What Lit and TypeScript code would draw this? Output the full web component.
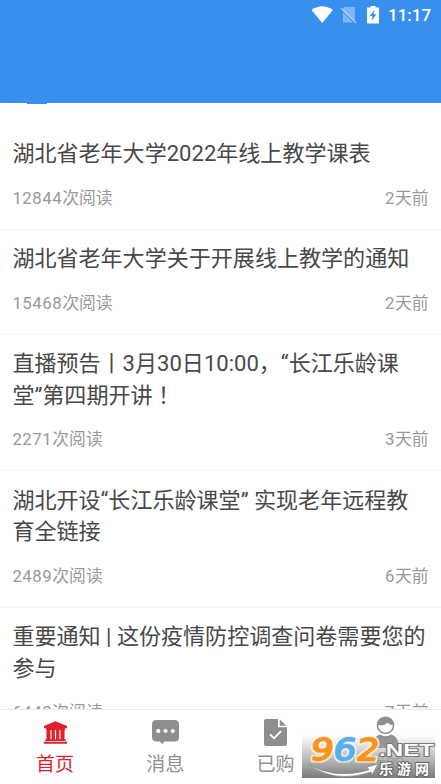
import { LitElement, html, svg, css } from "lit";
import { customElement, property } from "lit/decorators.js";

interface Article {
  title: string;
  mark?: string;
  reads: string;
  date: string;
}

const ARTICLES: Article[] = [
  { title: "湖北省老年大学2022年线上教学课表", reads: "12844", date: "2天前" },
  { title: "湖北省老年大学关于开展线上教学的通知", reads: "15468", date: "2天前" },
  { title: "直播预告丨3月30日10:00，“长江乐龄课堂”第四期开讲", mark: "！", reads: "2271", date: "3天前" },
  { title: "湖北开设“长江乐龄课堂” 实现老年远程教育全链接", reads: "2489", date: "6天前" },
  { title: "重要通知 | 这份疫情防控调查问卷需要您的参与", reads: "6448", date: "7天前" },
];

const ICONS: Record<string, unknown> = {
  home: svg`<path d="M15.500 2.300 27 7V9.300H4V7Z"/><path d="M6 9H25V11H6zM6.500 10.500h4v10h-4zM11.600 10.500h3.300v10h-3.300zM16.100 10.500h3.300v10h-3.300zM20.500 10.500h4v10h-4zM5.300 20.200h20.400v1.900H5.300zM3.800 22.700H27.200V24.700H3.800z"/>`,
  message: svg`<path d="M6.500 1H24.500Q29 1 29 5.500V18Q29 22.500 24.500 22.500H14.600L12.300 25 10 22.500H6.500Q2 22.500 2 18V5.500Q2 1 6.500 1Z"/><g fill="#fff"><circle cx="8.300" cy="12" r="2.100"/><circle cx="15.500" cy="12" r="2.100"/><circle cx="22.700" cy="12" r="2.100"/></g>`,
  bought: svg`<path d="M6 0H18V8.200H27V25Q27 27 25 27H6Q4 27 4 25V2Q4 0 6 0ZM19.700 .6 26.500 6.800H19.700Z"/><path d="m10 15.300 4.100 3.900 7-7" fill="none" stroke="#fff" stroke-width="1.800"/>`,
  me: svg`<circle cx="15.500" cy="6.300" r="8.100" fill="#fff" stroke="currentColor" stroke-width="1.500"/><path d="M7.400 6C8-4.300 22.500-4.300 23.600 5.900 20.800 6.300 18.800 5 17.800 3.500 15.200 6.200 11 6.700 7.400 6Z"/><path d="M10 15.500Q15.500 19 21 15.500 28.600 17 28.600 29H2.400Q2.400 17 10 15.500Z"/>`,
};

@customElement("status-bar")
class StatusBar extends LitElement {
  static styles = css`
    :host { display: flex; justify-content: flex-end; height: 31px; padding-right: 10px; box-sizing: border-box; color: #fff; }
    svg { width: 80px; height: 31px; }
    .time { width: 43px; font: 500 17px/31px Roboto, sans-serif; text-align: right; white-space: nowrap; }
  `;
  render() {
    return html`
      <svg viewBox="308 0 80 31" fill="#fff">
        <path d="M311.500 10Q322 2.500 333 10L322.200 23Z" />
        <path d="M345 7H355V22L343 10.500V9ZM343 12 353 22.500H343Z" opacity=".36" />
        <path d="m341 8 15 15" stroke="#fff" stroke-width="1.200" opacity=".5" />
        <path d="M370.500 6H375.500V7.500H379V23.500H367V7.500H370.500Z" />
        <path d="M374.500 10 369.700 16H372.500L371.600 20.800 376.500 14.300H373.700Z" fill="#388fee" />
      </svg>
      <span class="time">11:17</span>
    `;
  }
}

@customElement("article-row")
class ArticleRow extends LitElement {
  @property({ attribute: false }) article!: Article;
  static styles = css`
    :host { display: block; padding: 13.100px 12.400px 19.400px; border-bottom: 1px solid #f1f1f1; }
    .title { font-size: 22.050px; line-height: 31.500px; color: #484848; }
    .mark { font-family: "Noto Sans CJK TC", sans-serif; line-height: 1; }
    .meta { display: flex; justify-content: space-between; margin-top: 16px; font-size: 16.800px; line-height: 24px; color: #999; }
    .reads { letter-spacing: 0.550px; }
  `;
  render() {
    const { title, mark, reads, date } = this.article;
    return html`
      <div class="title">${title}${mark ? html`<span class="mark" lang="zh-TW">${mark}</span>` : ""}</div>
      <div class="meta">
        <span><span class="reads">${reads}</span>次阅读</span>
        <span><span class="reads">${date[0]}</span>${date.slice(1)}</span>
      </div>
    `;
  }
}

@customElement("tab-item")
class TabItem extends LitElement {
  @property() icon = "";
  @property() label = "";
  static styles = css`
    :host { flex: 1; display: flex; flex-direction: column; align-items: center; padding-top: 9px; color: #8e8e8e; }
    :host([active]) { color: #e0202a; }
    svg { width: 31px; height: 30px; overflow: visible; fill: currentColor; }
    .label { margin-top: 3px; font-size: 19px; line-height: 26px; }
  `;
  render() {
    return html`<svg viewBox="0 0 31 30">${ICONS[this.icon]}</svg><span class="label">${this.label}</span>`;
  }
}

@customElement("site-badge")
class SiteBadge extends LitElement {
  static styles = css`
    :host { display: block; width: 133px; height: 43px; background: linear-gradient(rgba(255,255,255,0), rgba(170,170,170,.72) 50%, rgba(112,112,112,.92)); }
    svg { display: block; width: 133px; height: 43px; overflow: visible; }
    text { paint-order: stroke; stroke-linejoin: round; }
    .digits { font: 400 31px "DejaVu Sans", sans-serif; stroke-width: 2px; filter: drop-shadow(1px 0 0 #fff) drop-shadow(-1px 0 0 #fff) drop-shadow(0 1px 0 #fff) drop-shadow(0 -1px 0 #fff); }
    .orange { fill: #f7941e; stroke: #f7941e; }
    .blue { fill: #58b0e8; stroke: #58b0e8; }
    .net { font: 700 17px "Liberation Sans", sans-serif; fill: #fff; stroke: #777; stroke-width: 2px; }
    .name { font: 700 14px "Noto Sans CJK SC", sans-serif; fill: #fff; stroke: #666; stroke-width: 2px; }
  `;
  render() {
    return html`
      <svg viewBox="0 0 133 43">
        <path d="M6 29Q32 45 67 35L65 32 76 29 70 40 69 37Q32 49 6 29Z" fill="#fff" stroke="#888" stroke-width=".7" />
        <g transform="translate(7 25.500) skewX(-9)">
          <text class="digits" textLength="69" lengthAdjust="spacingAndGlyphs"><tspan class="orange">9</tspan><tspan class="blue">6</tspan><tspan class="orange">2</tspan></text>
        </g>
        <text class="net" x="77" y="20.500" textLength="55" lengthAdjust="spacingAndGlyphs">.NET</text>
        <text class="name" x="77" y="38.500" textLength="50">乐游网</text>
      </svg>
    `;
  }
}

@customElement("app-root")
class AppRoot extends LitElement {
  static styles = css`
    :host { display: flex; flex-direction: column; position: relative; height: 784px; overflow: hidden; background: #fff; font-family: Roboto, "Noto Sans CJK SC", sans-serif; }
    .header { flex: none; height: 103px; background: #388fee; }
    .marker { width: 20px; height: 1px; margin-left: 27px; background: #388fee; flex: none; }
    .list { flex: 1; min-height: 0; overflow: hidden; padding-top: 21px; }
    .tabs { flex: none; display: flex; height: 75px; border-top: 1px solid #e9e9f0; background: #fff; box-sizing: border-box; }
    .badge { position: absolute; left: 302px; top: 735px; }
  `;
  render() {
    return html`
      <div class="header"><status-bar></status-bar></div>
      <div class="marker"></div>
      <div class="list">${ARTICLES.map((a) => html`<article-row .article=${a}></article-row>`)}</div>
      <div class="tabs">
        <tab-item active icon="home" label="首页"></tab-item>
        <tab-item icon="message" label="消息"></tab-item>
        <tab-item icon="bought" label="已购"></tab-item>
        <tab-item icon="me" label="我的"></tab-item>
      </div>
      <site-badge class="badge"></site-badge>
    `;
  }
}
